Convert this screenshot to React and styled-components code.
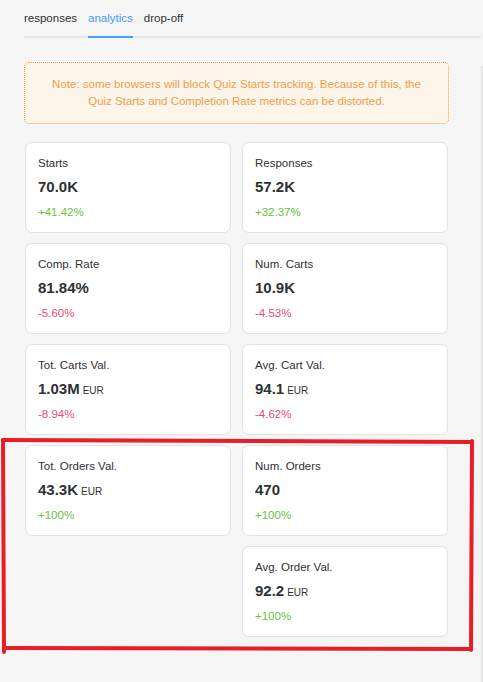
import React from "react";
import styled, { createGlobalStyle } from "styled-components";

const GlobalStyle = createGlobalStyle`
  html, body {
    margin: 0;
    padding: 0;
    background: #f5f5f5;
    font-family: "Liberation Sans", Arial, sans-serif;
  }
`;

const Page = styled.div`
  position: relative;
  display: flex;
  min-height: 682px;
  background: #f5f5f5;
`;

const Main = styled.main`
  flex: 1;
  display: flex;
  flex-direction: column;
`;

const SideEdge = styled.div`
  width: 2px;
  margin-top: 66px;
  background: #e6e6e6;
`;

const TabBar = styled.nav`
  display: flex;
  margin-left: 24px;
  border-bottom: 2px solid #e4e7ed;
`;

const Tab = styled.div`
  margin-right: 11px;
  padding: 10px 0 10px;
  margin-bottom: -2px;
  font-size: 11.5px;
  line-height: 16px;
  color: ${(p) => (p.active ? "#409eff" : "#303133")};
  border-bottom: 2px solid ${(p) => (p.active ? "#409eff" : "transparent")};
  cursor: pointer;
`;

const Content = styled.section`
  width: 425px;
  margin-left: 24px;
  padding-top: 24px;
`;

const Note = styled.div`
  padding: 13px 8px;
  background: #fdf5e9;
  border: 1px dotted #e6a23c;
  border-radius: 5px;
  color: #eaa04a;
  font-size: 11.5px;
  line-height: 17px;
  text-align: center;
  white-space: nowrap;
`;

const Grid = styled.div`
  display: grid;
  grid-template-columns: 1fr 1fr;
  column-gap: 11px;
  row-gap: 10px;
  margin-top: 18px;
  padding: 0 1px;
`;

const Card = styled.div`
  grid-column: ${(p) => p.col || "auto"};
  height: 91px;
  box-sizing: border-box;
  padding: 12px 12px;
  background: #fff;
  border: 1px solid #e2e2e2;
  border-radius: 7px;
`;

const Label = styled.div`
  font-size: 11.5px;
  line-height: 16px;
  color: #303133;
`;

const Value = styled.div`
  margin-top: 6px;
  height: 20px;
  font-size: 15px;
  line-height: 20px;
  font-weight: bold;
  color: #303133;
`;

const Unit = styled.span`
  margin-left: 3px;
  font-size: 10px;
  line-height: 1;
  font-weight: normal;
  color: #303133;
`;

const Change = styled.div`
  margin-top: 7px;
  font-size: 11.5px;
  line-height: 16px;
  color: ${(p) => (p.up ? "#67c23a" : "#ee4a70")};
`;

const Overlay = styled.svg`
  position: absolute;
  left: 0;
  top: 0;
  pointer-events: none;
`;

const metrics = [
  { label: "Starts", value: "70.0K", change: "+41.42%", up: true },
  { label: "Responses", value: "57.2K", change: "+32.37%", up: true },
  { label: "Comp. Rate", value: "81.84%", change: "-5.60%" },
  { label: "Num. Carts", value: "10.9K", change: "-4.53%" },
  { label: "Tot. Carts Val.", value: "1.03M", unit: "EUR", change: "-8.94%" },
  { label: "Avg. Cart Val.", value: "94.1", unit: "EUR", change: "-4.62%" },
  { label: "Tot. Orders Val.", value: "43.3K", unit: "EUR", change: "+100%", up: true },
  { label: "Num. Orders", value: "470", change: "+100%", up: true },
  { label: "Avg. Order Val.", value: "92.2", unit: "EUR", change: "+100%", up: true, col: 2 },
];

const App = () => {
  return (
    <Page>
      <GlobalStyle />
      <Main>
        <TabBar>
          <Tab>responses</Tab>
          <Tab active>analytics</Tab>
          <Tab>drop-off</Tab>
        </TabBar>
        <Content>
          <Note>
            Note: some browsers will block Quiz Starts tracking. Because of this, the
            <br />
            Quiz Starts and Completion Rate metrics can be distorted.
          </Note>
          <Grid>
            {metrics.map((m) => (
              <Card key={m.label} col={m.col}>
                <Label>{m.label}</Label>
                <Value>
                  {m.value}
                  {m.unit && <Unit>{m.unit}</Unit>}
                </Value>
                <Change up={m.up}>{m.change}</Change>
              </Card>
            ))}
          </Grid>
        </Content>
      </Main>
      <SideEdge />
      <Overlay width="483" height="682">
        <g stroke="#e61e25" strokeWidth="4" strokeLinecap="round" fill="none">
          <path d="M3 440 L472 442" />
          <path d="M472 441 L471 650" />
          <path d="M7 648 L469 649" />
          <path d="M3 440 L4 652" />
        </g>
      </Overlay>
    </Page>
  );
};

export default App;
